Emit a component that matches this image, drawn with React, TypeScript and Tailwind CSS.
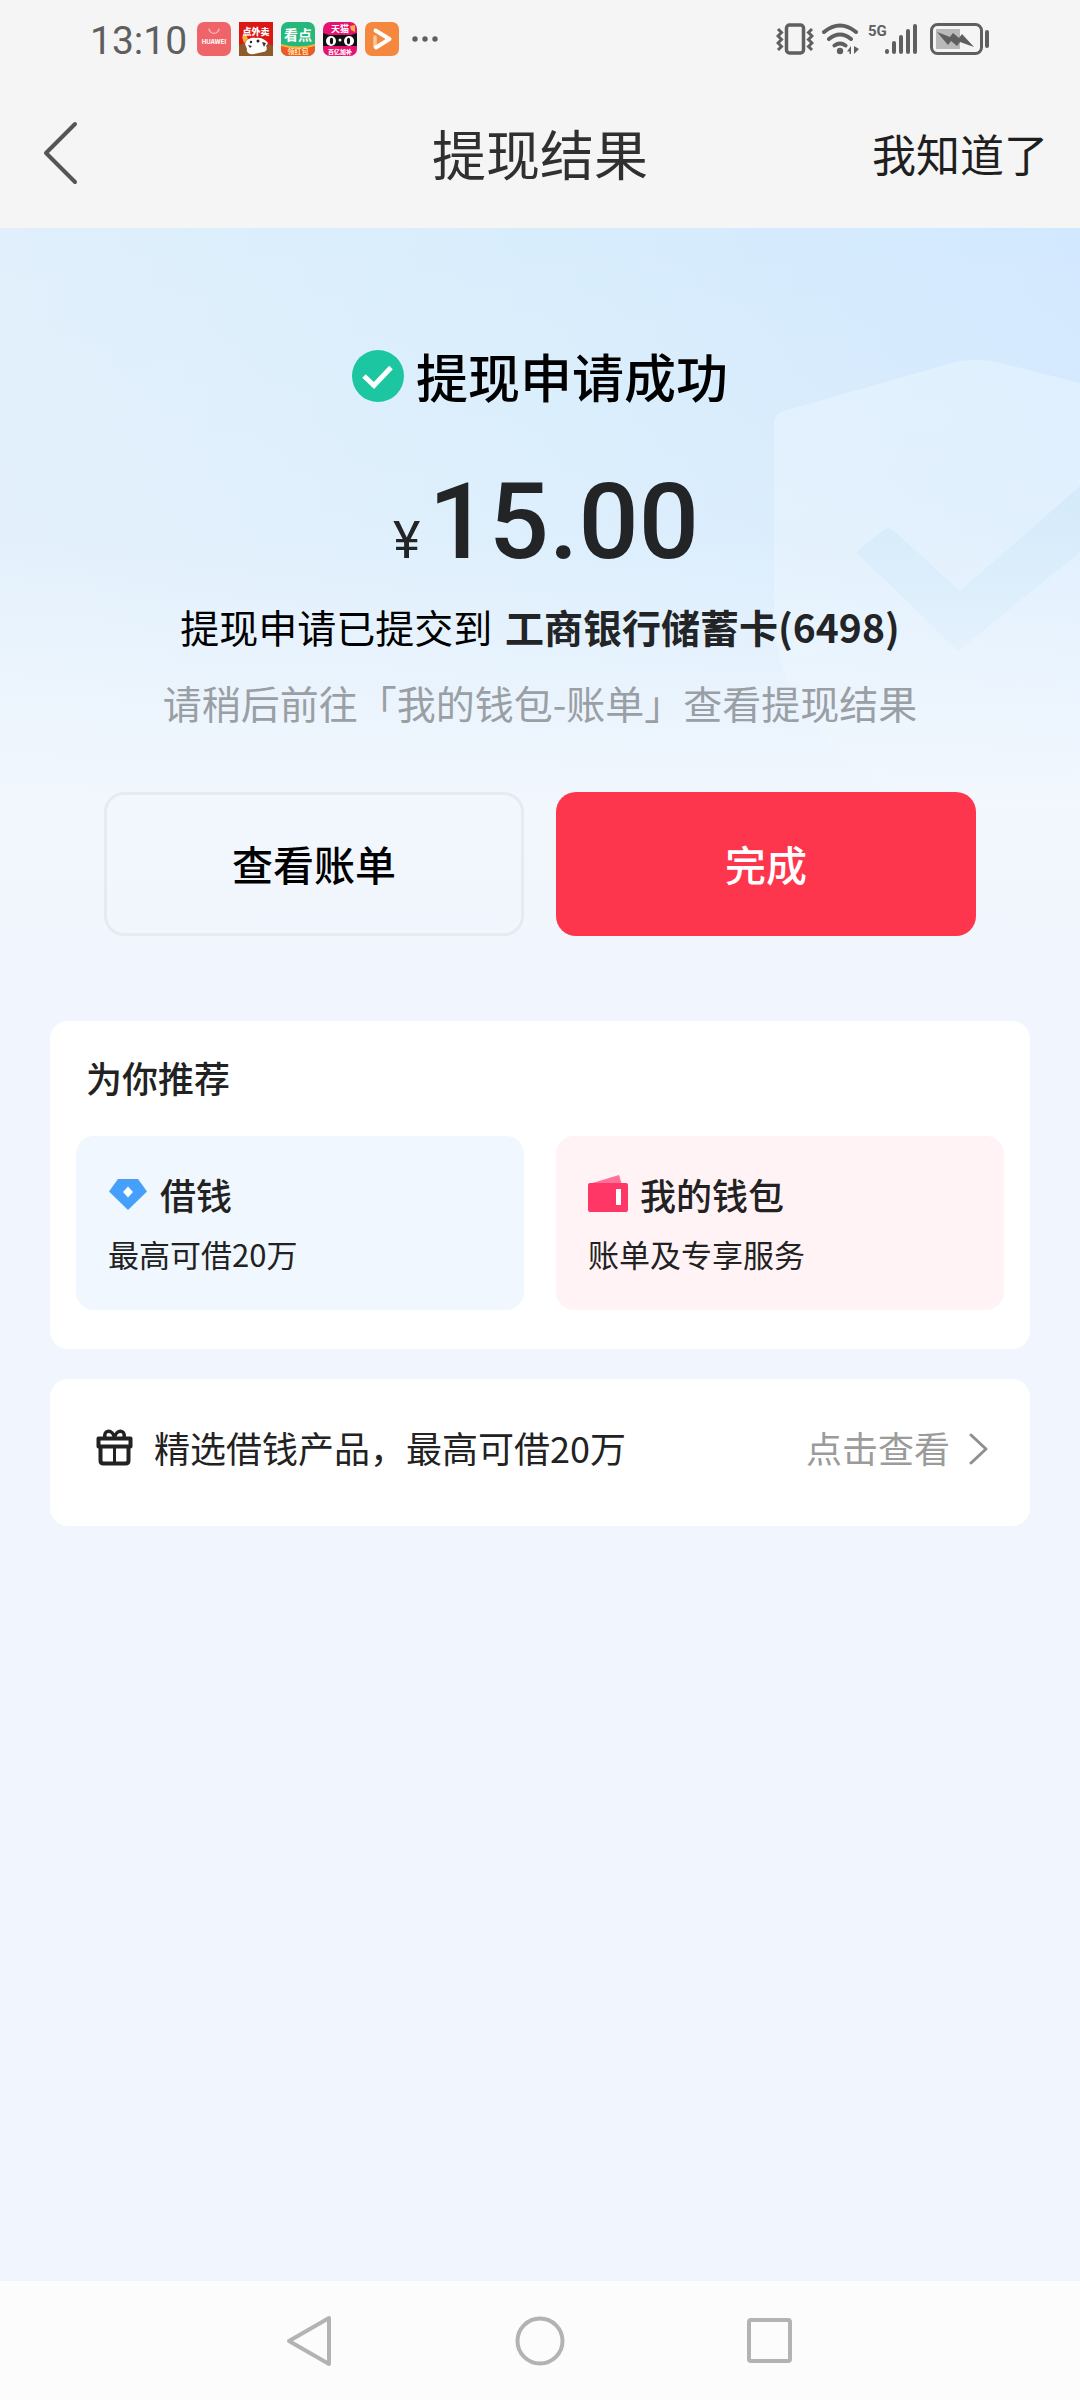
import type { ReactNode } from "react";

type RecommendTile = {
  title: string;
  description: string;
  tileClass: string;
  icon: ReactNode;
};

function AppIcons() {
  return (
    <div className="flex items-center gap-2">
      <svg className="h-[34px] w-[34px]" viewBox="0 0 34 34" aria-hidden="true">
        <rect width="34" height="34" rx="7" fill="#ef6468" />
        <path d="M12 6.500a5 4.800 0 0 0 10 0" fill="none" stroke="#f8b9b8" strokeWidth="1.300" />
        <text x="17" y="22" textAnchor="middle" fontSize="6" fontWeight="700" fill="#fff" fontFamily="Inter, sans-serif">
          HUAWEI
        </text>
      </svg>
      <svg className="h-[34px] w-[34px]" viewBox="0 0 34 34" aria-hidden="true">
        <rect width="34" height="34" fill="#dc1714" />
        <path d="M0 23l8-3 18 0 8 4v10H0z" fill="#8d5a2b" />
        <path d="M3 15l4-3 2 5-4 4z" fill="#f2b632" />
        <path d="M6 22c1-5 6-7 11-6 4-1 9 1 12 5l-2 3c2 3 0 6-3 6l-9 2c-5 1-8-2-7-5z" fill="#fff" />
        <circle cx="12" cy="20" r="1.200" fill="#222" />
        <circle cx="19" cy="19" r="1.500" fill="#222" />
        <path d="M9 23l4 1-2 2zM23 20l4 1-2 4z" fill="#333" />
        <text x="17" y="13" textAnchor="middle" fontSize="9" fontWeight="900" fill="#fff">
          点外卖
        </text>
      </svg>
      <svg className="h-[34px] w-[34px]" viewBox="0 0 34 34" aria-hidden="true">
        <rect width="34" height="34" rx="7" fill="#25b87a" />
        <path d="M0 23q17 4 34 0v4a7 7 0 0 1-7 7H7a7 7 0 0 1-7-7z" fill="#ee5a26" />
        <path d="M0 22q17 5 34 0v2q-17 5-34 0z" fill="#f4b43f" />
        <text x="17" y="18" textAnchor="middle" fontSize="14" fontWeight="700" fill="#fff">
          看点
        </text>
        <text x="17" y="32" textAnchor="middle" fontSize="7" fontWeight="700" fill="#ffe9a8">
          领红包
        </text>
      </svg>
      <svg className="h-[34px] w-[34px]" viewBox="0 0 34 34" aria-hidden="true">
        <rect width="34" height="34" rx="7" fill="#e5126f" />
        <path d="M0 11l6 2h22l6-2v13H0z" fill="#111" />
        <circle cx="8" cy="19" r="5" fill="#fff" />
        <circle cx="26" cy="19" r="5" fill="#fff" />
        <ellipse cx="8.500" cy="19" rx="1.600" ry="3.200" fill="#111" />
        <ellipse cx="25.500" cy="19" rx="1.600" ry="3.200" fill="#111" />
        <circle cx="17" cy="18" r="1.500" fill="#fff" />
        <path d="M27 4l5-1v7l-4-2z" fill="#f5b53a" />
        <text x="17" y="10" textAnchor="middle" fontSize="9" fontWeight="700" fill="#fff">
          天猫
        </text>
        <text x="17" y="32" textAnchor="middle" fontSize="6" fontWeight="900" fill="#fff">
          百亿加补
        </text>
      </svg>
      <svg className="h-[34px] w-[34px]" viewBox="0 0 34 34" aria-hidden="true">
        <rect width="34" height="34" rx="7" fill="#f5883f" />
        <path d="M10 24.500L10 15" fill="none" stroke="#ffc9a0" strokeWidth="3.500" strokeLinecap="round" />
        <path d="M10.500 8.500L24.500 17 11 25.500" fill="none" stroke="#fff" strokeWidth="4" strokeLinecap="round" strokeLinejoin="round" />
      </svg>
    </div>
  );
}

function StatusBar() {
  return (
    <div className="flex h-[78px] items-center justify-between px-[90px] text-[#5f5f5f]">
      <div className="flex items-center gap-2.5">
        <span className="pt-1 font-[Roboto,sans-serif] text-[39px] leading-none">13:10</span>
        <AppIcons />
        <svg className="h-3 w-8" viewBox="0 0 32 12" fill="currentColor" aria-hidden="true">
          <circle cx="6" cy="6" r="2.700" />
          <circle cx="16" cy="6" r="2.700" />
          <circle cx="26" cy="6" r="2.700" />
        </svg>
      </div>
      <div className="flex items-center gap-2">
        <svg className="h-8 w-[38px]" viewBox="0 0 38 32" fill="none" stroke="currentColor" strokeWidth="3.500" aria-hidden="true">
          <rect x="10.500" y="2" width="17" height="28" rx="3" />
          <path d="M2 6l3.500 3.500L2 13l3.500 3.500L2 20l3.500 3.500L2 27M36 6l-3.500 3.500L36 13l-3.500 3.500L36 20l-3.500 3.500L36 27" strokeWidth="3" />
        </svg>
        <svg className="h-8 w-[38px]" viewBox="0 0 38 32" fill="none" stroke="currentColor" aria-hidden="true">
          <path d="M2 9q16-13 32 0M7 16q11-9 22 0M12.500 22.500q5.500-4 11 0" strokeWidth="4" strokeLinecap="round" />
          <circle cx="18" cy="28" r="3.200" fill="currentColor" stroke="none" />
          <path d="M29 23v8h-1.500v-2.500H25zM32 23v8l5-5z" fill="currentColor" stroke="none" />
        </svg>
        <svg className="h-10 w-[50px]" viewBox="0 -4 50 40" fill="none" stroke="currentColor" aria-hidden="true">
          <text x="0" y="13" fontSize="15" fontWeight="700" fill="currentColor" stroke="none" fontFamily="Roboto, sans-serif">
            5G
          </text>
          <path d="M19 28v1M26 20v9M33 14v15M40 8v21M47 3v26" strokeWidth="4" strokeLinecap="round" />
        </svg>
        <svg className="ml-1 h-8 w-[60px]" viewBox="0 0 60 32" fill="none" stroke="currentColor" aria-hidden="true">
          <rect x="1.500" y="1.500" width="50" height="29" rx="6" strokeWidth="3" />
          <rect x="6" y="6" width="24" height="20" fill="#b9b9b9" stroke="none" />
          <path d="M7 9l13 5 3-4 6 5 3-4 12 13-14-5-3 4-6-5-3 4z" fill="currentColor" stroke="none" />
          <path d="M57 9v14" strokeWidth="4" strokeLinecap="round" />
        </svg>
      </div>
    </div>
  );
}

function TitleBar() {
  return (
    <header className="grid h-[150px] grid-cols-3 items-center px-8">
      <button type="button" aria-label="返回" className="justify-self-start text-[#555]">
        <svg className="h-[66px] w-12" viewBox="0 0 48 66" fill="none" stroke="currentColor" strokeWidth="4" strokeLinecap="round" strokeLinejoin="round">
          <path d="M43 4L14 33l29 29" />
        </svg>
      </button>
      <h1 className="text-center text-[54px] leading-none text-[#303030]">提现结果</h1>
      <button type="button" className="justify-self-end text-[44px] leading-none text-[#1f1f1f]">
        我知道了
      </button>
    </header>
  );
}

function ShieldBackdrop() {
  return (
    <svg className="pointer-events-none absolute top-[126px] right-0 h-[480px] w-[308px]" viewBox="0 0 308 480" aria-hidden="true">
      <defs>
        <linearGradient id="shield" x1="0" y1="0" x2="0" y2="1">
          <stop offset="0" stopColor="#eef8fe" stopOpacity="0.450" />
          <stop offset="0.600" stopColor="#f2f9fe" stopOpacity="0.350" />
          <stop offset="1" stopColor="#fff" stopOpacity="0" />
        </linearGradient>
        <linearGradient id="shieldCheck" x1="0" y1="0" x2="0" y2="1">
          <stop offset="0" stopColor="#c6e4f6" stopOpacity="0.450" />
          <stop offset="1" stopColor="#c6e4f6" stopOpacity="0.150" />
        </linearGradient>
      </defs>
      <path d="M2 70Q2 60 12 57L180 9q24-6 48 0l80 20v433l-80 18q-100-20-170-90Q2 330 2 260z" fill="url(#shield)" />
      <path d="M84 198l28-22q5-4 10 1l66 60L308 132v66L186 297z" fill="url(#shieldCheck)" />
    </svg>
  );
}

const tiles: RecommendTile[] = [
  {
    title: "借钱",
    description: "最高可借20万",
    tileClass: "bg-[#f0f7fe]",
    icon: (
      <svg className="h-10 w-10" viewBox="0 0 40 40" aria-hidden="true">
        <path d="M10 5h20l9 12.500L20 36 1 17.500z" fill="#469ffb" />
        <path d="M20 12.500l5 5.500-5 5.500-5-5.500z" fill="#fff" />
      </svg>
    ),
  },
  {
    title: "我的钱包",
    description: "账单及专享服务",
    tileClass: "bg-[#fff3f6]",
    icon: (
      <svg className="h-10 w-10" viewBox="0 0 40 40" aria-hidden="true">
        <path d="M1 10L31 1l3 10H1z" fill="#ff7096" />
        <path d="M0 11q0-2 2-2h36q2 0 2 2v25q0 2-2 2H2q-2 0-2-2z" fill="#ff3767" />
        <path d="M28 15h5v16h-5z" fill="#fff" />
      </svg>
    ),
  },
];

function RecommendCard() {
  return (
    <section className="rounded-[18px] bg-white px-[26px] pt-[34px] pb-[39px]">
      <h2 className="px-2.5 text-[36px] leading-[44px] font-medium text-[#222]">为你推荐</h2>
      <div className="mt-[37px] grid grid-cols-2 gap-8">
        {tiles.map((tile) => (
          <a key={tile.title} href="#" className={`flex h-[174px] flex-col justify-center gap-4 rounded-[18px] px-8 pt-0.5 ${tile.tileClass}`}>
            <div className="flex items-center gap-3">
              {tile.icon}
              <span className="text-[36px] leading-[44px] font-medium text-[#222]">{tile.title}</span>
            </div>
            <p className="text-[31px] leading-[44px] text-[#222]">{tile.description}</p>
          </a>
        ))}
      </div>
    </section>
  );
}

function LoanRow() {
  return (
    <a href="#" className="flex h-[147px] items-center rounded-[18px] bg-white pr-10 pb-3 pl-11 text-[36px] leading-[44px]">
      <svg className="h-10 w-10" viewBox="0 0 40 40" fill="none" stroke="#222" strokeWidth="4" strokeLinejoin="round" aria-hidden="true">
        <path d="M4.500 11.500h32v8h-32zM6.500 19.500h28v14q0 3-3 3h-22q-3 0-3-3z" />
        <path d="M20.500 19.500v17" strokeWidth="3" />
        <path d="M11 11c-2-9 8-9 9.500 0 1.500-9 11.500-9 9.500 0" strokeWidth="3.500" />
      </svg>
      <span className="ml-5 flex-1 text-[#222]">精选借钱产品，最高可借20万</span>
      <span className="text-[#9b9b9b]">点击查看</span>
      <svg className="ml-4 h-10 w-6" viewBox="0 0 24 40" fill="none" stroke="#8f8f8f" strokeWidth="3" strokeLinecap="round" strokeLinejoin="round" aria-hidden="true">
        <path d="M5 8l15 14L5 36" />
      </svg>
    </a>
  );
}

function ResultPanel() {
  return (
    <section className="relative px-[104px] pt-[118px] text-center">
      <div className="flex items-center justify-center gap-3">
        <svg className="h-[52px] w-[52px]" viewBox="0 0 52 52" aria-hidden="true">
          <circle cx="26" cy="26" r="26" fill="#1bc6a1" />
          <path d="M12 26l10 9.500L39 17.500" fill="none" stroke="#fff" strokeWidth="5" />
        </svg>
        <h2 className="text-[52px] leading-[60px] font-medium text-black">提现申请成功</h2>
      </div>
      <p className="mt-14 flex items-baseline justify-center gap-2 pl-3 font-[Roboto,'Noto_Sans_CJK_SC',sans-serif] font-medium text-[#222426]">
        <span className="text-[52px] leading-none font-normal">¥</span>
        <span className="text-[106px] leading-[120px]">15.00</span>
      </p>
      <p className="mt-4 text-[39px] leading-[56px] whitespace-nowrap text-black">
        提现申请已提交到 <strong className="ml-1 font-bold text-[#222426]">工商银行储蓄卡(6498)</strong>
      </p>
      <p className="-mx-10 mt-5 text-[39px] leading-[56px] whitespace-nowrap text-[#9a9fa4]">
        请稍后前往「我的钱包-账单」查看提现结果
      </p>
      <div className="mt-[62px] grid grid-cols-2 gap-8 text-[41px] font-medium">
        <button type="button" className="h-36 rounded-[20px] border-[3px] border-[#e6ebf1] text-black">
          查看账单
        </button>
        <button type="button" className="h-36 rounded-[20px] bg-[#fe364d] text-white">
          完成
        </button>
      </div>
    </section>
  );
}

function NavigationBar() {
  return (
    <nav className="flex h-[119px] items-center justify-center gap-[178px] bg-[#fcfcfd] text-[#b3b3b3]">
      <button type="button" aria-label="后退">
        <svg className="h-[52px] w-[52px]" viewBox="0 0 52 52" fill="none" stroke="currentColor" strokeWidth="4" strokeLinejoin="round">
          <path d="M45 3v46L5 26z" />
        </svg>
      </button>
      <button type="button" aria-label="主屏幕">
        <svg className="h-[52px] w-[52px]" viewBox="0 0 52 52" fill="none" stroke="currentColor" strokeWidth="4">
          <circle cx="26" cy="26" r="22.500" />
        </svg>
      </button>
      <button type="button" aria-label="最近任务">
        <svg className="h-[52px] w-[52px]" viewBox="0 0 52 52" fill="none" stroke="currentColor" strokeWidth="4">
          <rect x="5" y="5" width="41" height="41" rx="2" />
        </svg>
      </button>
    </nav>
  );
}

export default function App() {
  return (
    <div className="flex min-h-screen flex-col bg-[#f0f5fe] font-['Noto_Sans_CJK_SC',sans-serif]">
      <div className="bg-[#f5f5f5]">
        <StatusBar />
        <TitleBar />
      </div>
      <main className="relative flex-1 overflow-hidden">
        <div className="pointer-events-none absolute inset-x-0 top-0 h-[1100px] bg-linear-to-r from-[#e0effb] via-[#d8edfc] to-[#d2e8fe]" />
        <div className="pointer-events-none absolute inset-x-0 top-0 h-[1100px] bg-[linear-gradient(to_bottom,#f2f7fe00_0%,#f2f7fe33_28%,#f2f7fe99_40%,#f2f7fe_52%,#f0f5fe_100%)]" />
        <ShieldBackdrop />
        <ResultPanel />
        <div className="relative mt-[85px] flex flex-col gap-[30px] px-[50px] pb-10">
          <RecommendCard />
          <LoanRow />
        </div>
      </main>
      <NavigationBar />
    </div>
  );
}
